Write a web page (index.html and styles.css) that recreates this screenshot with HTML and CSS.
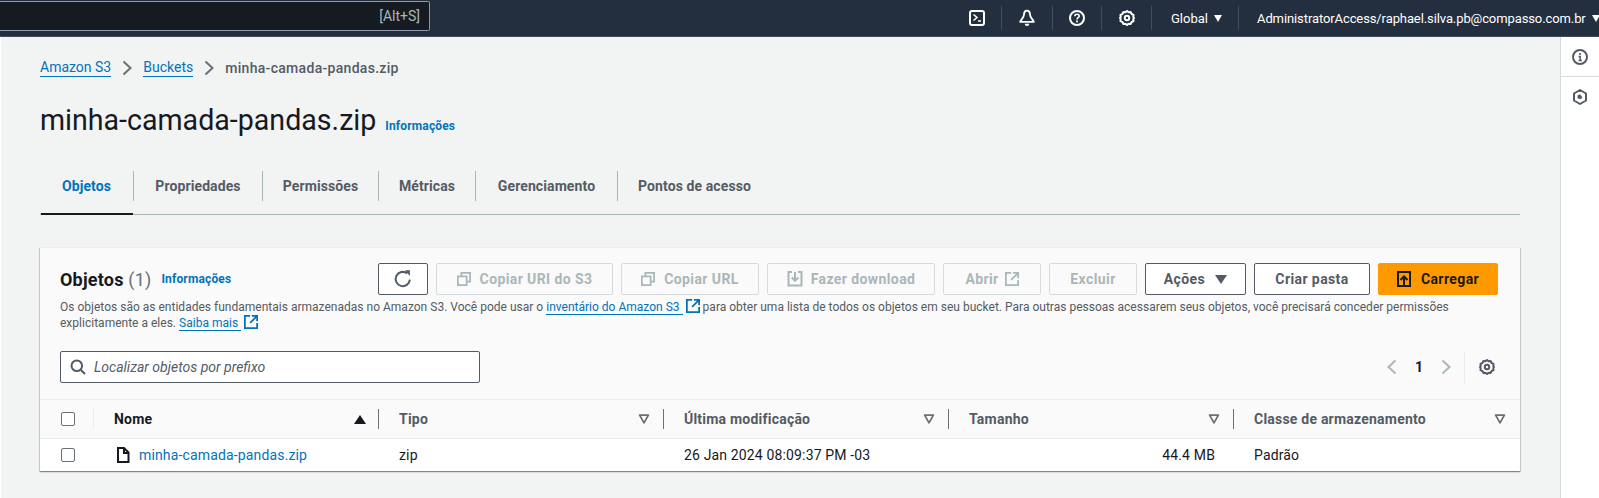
FILE: index.html
```html
<!DOCTYPE html>
<html lang="en">

<head>
    <meta charset="UTF-8" />
    <meta name="viewport" content="width=device-width, initial-scale=1.0" />
    <title>minha-camada-pandas.zip</title>
    <link rel="stylesheet" href="styles.css">
</head>

<body>
    <svg class="defs" width="0" height="0">
        <symbol id="i-gear" viewBox="0 0 16 16">
            <path d="M8 1l1.600 1.300 2.100-.2.900 1.900 1.900.9-.2 2.100L15 8l-.7 1 .2 2.100-1.900.9-.9 1.900-2.100-.2L8 15l-1.600-1.300-2.100.2-.9-1.900-1.900-.9.2-2.100L1 8l.7-1-.2-2.100 1.900-.9.9-1.900 2.100.2z" fill="none" stroke="currentColor" stroke-width="2" stroke-linejoin="round" />
            <circle cx="8" cy="8" r="2.200" fill="none" stroke="currentColor" stroke-width="2" />
        </symbol>
        <symbol id="i-copy" viewBox="0 0 16 16">
            <path d="M5 5V1h10v10h-4M1 5h10v10H1z" fill="none" stroke="currentColor" stroke-width="2" />
        </symbol>
        <symbol id="i-ext" viewBox="0 0 16 16">
            <path d="M7 1H1v14h14V9M9 1h6v6M15 1L7 9" fill="none" stroke="currentColor" stroke-width="2" />
        </symbol>
        <symbol id="i-filter" viewBox="0 0 16 16">
            <path d="M3 3.500h10L8 12.500z" fill="none" stroke="currentColor" stroke-width="2" stroke-linejoin="round" />
        </symbol>
    </svg>

    <header class="topbar">
        <div class="search-global"><span>[Alt+S]</span></div>
        <div class="top-actions">
            <div class="top-icon">
                <svg width="16" height="16" viewBox="0 0 16 16"><rect x="1" y="1" width="14" height="14" rx="2" fill="none" stroke="currentColor" stroke-width="2" /><path d="M4.500 4.500L8 7.500l-3.500 3M9 11h3" fill="none" stroke="currentColor" stroke-width="1.600" /></svg>
            </div>
            <div class="top-icon top-icon-wide">
                <svg width="18" height="18" viewBox="0 0 16 16"><path d="M8 1.500c1.700 0 2.600 1.300 2.600 3.200 0 3 3.400 5.300 3.400 6.800H2c0-1.500 3.400-3.800 3.400-6.800C5.400 2.800 6.300 1.500 8 1.500z" fill="none" stroke="currentColor" stroke-width="1.600" stroke-linejoin="round" /><path d="M6 13a2 2 0 004 0z" fill="currentColor" /></svg>
            </div>
            <div class="top-icon top-icon-thin">
                <svg width="16" height="16" viewBox="0 0 16 16"><circle cx="8" cy="8" r="7" fill="none" stroke="currentColor" stroke-width="2" /><path d="M5.800 6.200C5.800 4.900 6.800 4.200 8 4.200s2.200.8 2.200 1.900c0 1.600-2.200 1.700-2.200 3.400" fill="none" stroke="currentColor" stroke-width="1.600" /><rect x="7.100" y="10.500" width="1.800" height="1.800" fill="currentColor" /></svg>
            </div>
            <div class="top-icon">
                <svg width="16" height="16"><use href="#i-gear" /></svg>
            </div>
            <div class="top-menu top-region">Global <i class="caret"></i></div>
            <div class="top-menu top-user">AdministratorAccess/raphael.silva.pb@compasso.com.br <i class="caret"></i></div>
        </div>
    </header>

    <div class="layout">
        <main class="main">
            <nav class="crumbs">
                <a href="#">Amazon S3</a>
                <svg class="crumb-sep" width="10" height="16" viewBox="0 0 10 16"><path d="M1.500 1.500L8.500 8l-7 6.500" fill="none" stroke="currentColor" stroke-width="2" /></svg>
                <a href="#">Buckets</a>
                <svg class="crumb-sep" width="10" height="16" viewBox="0 0 10 16"><path d="M1.500 1.500L8.500 8l-7 6.500" fill="none" stroke="currentColor" stroke-width="2" /></svg>
                <span>minha-camada-pandas.zip</span>
            </nav>

            <div class="page-title">
                <h1>minha-camada-pandas.zip</h1>
                <a class="info" href="#">Informações</a>
            </div>

            <ul class="tabs">
                <li class="tab tab-active">Objetos</li>
                <li class="tab tab-2">Propriedades</li>
                <li class="tab tab-3">Permissões</li>
                <li class="tab tab-4">Métricas</li>
                <li class="tab tab-5">Gerenciamento</li>
                <li class="tab tab-6">Pontos de acesso</li>
            </ul>

            <section class="card">
                <div class="card-head">
                    <div class="card-top">
                        <h2>Objetos <span class="count">(1)</span></h2>
                        <a class="info" href="#">Informações</a>
                        <div class="toolbar">
                            <button class="btn btn-refresh">
                                <svg width="20" height="20" viewBox="0 0 16 16"><path d="M13.500 8.500a5.700 5.700 0 11-2.200-5" fill="none" stroke="currentColor" stroke-width="1.600" /><path d="M9.500 1h4v4.500z" fill="currentColor" /></svg>
                            </button>
                            <button class="btn btn-off btn-uri"><svg width="14" height="14"><use href="#i-copy" /></svg>Copiar URI do S3</button>
                            <button class="btn btn-off btn-url"><svg width="14" height="14"><use href="#i-copy" /></svg>Copiar URL</button>
                            <button class="btn btn-off btn-down">
                                <svg width="16" height="16" viewBox="0 0 16 16"><path d="M5 1H1.500v13.500h13V1H11M8 1v8M4.800 6.500L8 9.800l3.200-3.300" fill="none" stroke="currentColor" stroke-width="2" /></svg>
                                Fazer download
                            </button>
                            <button class="btn btn-off btn-open">Abrir <svg width="14" height="14"><use href="#i-ext" /></svg></button>
                            <button class="btn btn-off btn-del">Excluir</button>
                            <button class="btn btn-acts">Ações <i class="caret caret-big"></i></button>
                            <button class="btn btn-folder">Criar pasta</button>
                            <button class="btn btn-primary">
                                <svg width="14" height="16" viewBox="0 0 14 16"><path d="M1 1h12v14H1zM7 15V6M3.500 9L7 5.500 10.500 9" fill="none" stroke="currentColor" stroke-width="2" /></svg>
                                Carregar
                            </button>
                        </div>
                    </div>
                    <div class="desc">
                        <p>Os objetos são as entidades fundamentais armazenadas no Amazon S3. Você pode usar o <a href="#">inventário do Amazon S3</a> <svg width="14" height="14"><use href="#i-ext" /></svg> para obter uma lista de todos os objetos em seu bucket. Para outras pessoas acessarem seus objetos, você precisará conceder permissões</p>
                        <p>explicitamente a eles. <a href="#">Saiba mais</a> <svg width="14" height="14"><use href="#i-ext" /></svg></p>
                    </div>
                    <div class="filter-row">
                        <div class="filter-box">
                            <svg width="16" height="16" viewBox="0 0 16 16"><circle cx="6.800" cy="6.800" r="5.300" fill="none" stroke="currentColor" stroke-width="2" /><path d="M10.700 10.700L15 15" stroke="currentColor" stroke-width="2" /></svg>
                            <span>Localizar objetos por prefixo</span>
                        </div>
                        <div class="pager">
                            <svg class="pager-arrow" width="10" height="16" viewBox="0 0 10 16"><path d="M8.500 1.500L1.500 8l7 6.500" fill="none" stroke="currentColor" stroke-width="2" /></svg>
                            <span class="page-num">1</span>
                            <svg class="pager-arrow" width="10" height="16" viewBox="0 0 10 16"><path d="M1.500 1.500L8.500 8l-7 6.500" fill="none" stroke="currentColor" stroke-width="2" /></svg>
                            <div class="pager-gear"><svg width="16" height="16"><use href="#i-gear" /></svg></div>
                        </div>
                    </div>
                </div>

                <div class="table">
                    <div class="th th-check"><i class="check"></i></div>
                    <div class="th th-name">Nome <i class="sort-up"></i></div>
                    <div class="th">Tipo <svg class="flt" width="14" height="14"><use href="#i-filter" /></svg></div>
                    <div class="th">Última modificação <svg class="flt" width="14" height="14"><use href="#i-filter" /></svg></div>
                    <div class="th">Tamanho <svg class="flt" width="14" height="14"><use href="#i-filter" /></svg></div>
                    <div class="th th-last">Classe de armazenamento <svg class="flt" width="14" height="14"><use href="#i-filter" /></svg></div>

                    <div class="td td-check"><i class="check"></i></div>
                    <div class="td td-name">
                        <svg width="14" height="16" viewBox="0 0 14 16"><path d="M2 1h6l4.500 4.500V15H2zM8 1v5h4.500" fill="none" stroke="currentColor" stroke-width="2" /></svg>
                        <a href="#">minha-camada-pandas.zip</a>
                    </div>
                    <div class="td">zip</div>
                    <div class="td">26 Jan 2024 08:09:37 PM -03</div>
                    <div class="td td-size">44.4 MB</div>
                    <div class="td">Padrão</div>
                </div>
            </section>
        </main>

        <aside class="side">
            <div class="side-item">
                <svg width="16" height="16" viewBox="0 0 16 16"><circle cx="8" cy="8" r="7" fill="none" stroke="currentColor" stroke-width="2" /><path d="M6.500 7.500H8.200V11.500M6.500 11.500h3.400" fill="none" stroke="currentColor" stroke-width="1.500" /><rect x="7.200" y="4" width="1.800" height="1.800" fill="currentColor" /></svg>
            </div>
            <div class="side-item side-item-2">
                <svg width="16" height="16" viewBox="0 0 16 16"><path d="M8 1l6 3.500v7L8 15l-6-3.500v-7z" fill="none" stroke="currentColor" stroke-width="2" stroke-linejoin="round" /><path d="M5.500 6.500L8 5.200l2.500 3.300-2 1.800-3-1z" fill="currentColor" /></svg>
            </div>
        </aside>
    </div>
</body>

</html>
```

FILE: styles.css
```css
* {
    box-sizing: border-box;
}

html,
body {
    margin: 0;
    height: 498px;
    overflow: hidden;
}

body {
    background-color: #f2f3f3;
    color: #16191f;
    font-family: Roboto, "Liberation Sans", sans-serif;
    font-size: 14px;
}

a {
    color: #0073bb;
    text-decoration: none;
}

.defs {
    position: absolute;
}

/* top nav */
.topbar {
    display: flex;
    justify-content: space-between;
    height: 37px;
    background-color: #232f3e;
    border-bottom: 1px solid #3f4b5b;
    color: #fff;
}

.search-global {
    display: flex;
    align-items: center;
    justify-content: flex-end;
    width: 430px;
    height: 30px;
    margin-top: 1px;
    padding-right: 9px;
    background-color: #161b22;
    border: 1px solid #8d99a8;
    border-left: 0;
    border-radius: 0 2px 2px 0;
    color: #aab7b8;
    font-size: 14px;
}

.top-actions {
    display: flex;
    align-items: center;
    height: 36px;
}

.top-icon {
    display: flex;
    align-items: center;
    justify-content: center;
    width: 50px;
    height: 24px;
    border-right: 1px solid #414d5c;
}

.top-icon-wide {
    width: 51px;
}

.top-icon-thin {
    width: 49px;
}

.top-menu {
    display: flex;
    align-items: center;
    height: 24px;
    font-size: 13px;
}

.top-region {
    width: 87px;
    padding-left: 19px;
    border-right: 1px solid #414d5c;
}

.top-user {
    width: 360px;
    padding-left: 18px;
    letter-spacing: -0.1px;
}

.caret {
    width: 0;
    height: 0;
    margin-left: 6px;
    border-left: 4.5px solid transparent;
    border-right: 4.5px solid transparent;
    border-top: 7px solid currentColor;
}

/* page */
.layout {
    display: flex;
    height: 461px;
}

.main {
    flex: 1;
    padding: 0 40px 0 39px;
    border-left: 1px solid #fff;
}

.crumbs {
    display: flex;
    align-items: center;
    gap: 11px;
    height: 20px;
    margin-top: 21px;
    color: #545b64;
}

.crumbs a {
    border-bottom: 1px solid #0073bb;
    line-height: 17px;
}

.crumbs span {
    font-weight: 500;
    letter-spacing: 0.3px;
}

.crumb-sep {
    color: #687078;
}

.page-title {
    display: flex;
    align-items: baseline;
    gap: 9px;
    margin-top: 20px;
}

h1 {
    margin: 0;
    font-size: 28.6px;
    font-weight: 400;
    line-height: 45px;
}

.info {
    font-size: 12px;
    font-weight: 700;
    letter-spacing: 0.15px;
}

/* tabs */
.tabs {
    display: flex;
    height: 45px;
    margin: 27px 0 0 0;
    padding: 0 0 3px 0;
    list-style: none;
    border-bottom: 1px solid #aab7b8;
    font-weight: 700;
    font-size: 14px;
    letter-spacing: 0.1px;
    color: #545b64;
    position: relative;
}

.tab {
    display: flex;
    align-items: center;
    justify-content: center;
    height: 30px;
    margin-top: 1px;
    border-right: 1px solid #aab7b8;
}

.tab-active {
    width: 94px;
    color: #0073bb;
}

/* underline sits over the tab border */
.tab-active::after {
    content: "";
    position: absolute;
    left: 1px;
    bottom: -1px;
    width: 92px;
    height: 2px;
    background-color: #16191f;
}

.tab-2 {
    width: 129px;
}

.tab-3 {
    width: 116px;
}

.tab-4 {
    width: 97px;
}

.tab-5 {
    width: 142px;
}

.tab-6 {
    width: 153px;
    border-right: 0;
}

/* card */
.card {
    width: 1480px;
    margin-top: 32px;
    background-color: #fff;
    box-shadow: 0 1px 1px 0 rgba(0, 28, 36, 0.3), 1px 1px 1px 0 rgba(0, 28, 36, 0.15), -1px 1px 1px 0 rgba(0, 28, 36, 0.15);
    border-top: 1px solid #eaeded;
}

.card-head {
    height: 152px;
    padding: 15px 22px 0 20px;
    background-color: #fafafa;
    border-bottom: 1px solid #eaeded;
}

.card-top {
    display: flex;
    align-items: center;
    height: 32px;
}

h2 {
    margin: 0 10px 0 0;
    font-size: 18px;
    font-weight: 700;
    letter-spacing: 0.2px;
}

.count {
    color: #687078;
    font-weight: 400;
}

.toolbar {
    display: flex;
    gap: 8px;
    margin-left: auto;
}

.btn {
    display: flex;
    align-items: center;
    justify-content: center;
    gap: 9px;
    height: 32px;
    padding: 0;
    background-color: #fff;
    border: 1px solid #545b64;
    border-radius: 2px;
    color: #545b64;
    font-family: inherit;
    font-size: 14px;
    font-weight: 700;
    letter-spacing: 0.4px;
}

.btn-off {
    background-color: #fafafa;
    border-color: #d5dbdb;
    color: #aab7b8;
}

.btn-refresh {
    width: 50px;
    color: #545b64;
}

.btn-uri {
    width: 177px;
}

.btn-url {
    width: 138px;
}

.btn-down {
    width: 168px;
    gap: 8px;
}

.btn-open {
    width: 98px;
    gap: 6px;
}

.btn-del {
    width: 88px;
}

.btn-acts {
    width: 101px;
    gap: 5px;
}

.btn-folder {
    width: 116px;
}

.btn-primary {
    width: 120px;
    background-color: #ff9900;
    border-color: #ff9900;
    color: #16191f;
    gap: 10px;
}

.caret-big {
    margin-left: 5px;
    border-left-width: 6px;
    border-right-width: 6px;
    border-top-width: 9px;
}

.desc {
    margin-top: 4px;
    color: #545b64;
    font-size: 12px;
    line-height: 16px;
    letter-spacing: 0.01px;
    white-space: nowrap;
}

.desc p {
    margin: 0;
}

.desc a {
    padding-right: 3px;
    border-bottom: 1px solid #0073bb;
}

.desc svg {
    vertical-align: -2px;
    color: #0073bb;
}

.filter-row {
    display: flex;
    justify-content: space-between;
    align-items: center;
    margin-top: 20px;
    height: 32px;
}

.filter-box {
    display: flex;
    align-items: center;
    gap: 8px;
    width: 420px;
    height: 32px;
    padding-left: 9px;
    background-color: #fff;
    border: 1px solid #545b64;
    border-radius: 2px;
    color: #545b64;
    font-size: 14px;
    font-style: italic;
}

.pager {
    display: flex;
    align-items: center;
    height: 32px;
}

.pager-arrow {
    color: #aab7b8;
}

.page-num {
    margin: 0 18px;
    font-weight: 700;
    font-size: 14px;
}

.pager-gear {
    display: flex;
    align-items: center;
    justify-content: flex-end;
    width: 34px;
    height: 32px;
    margin-left: 13px;
    padding-right: 3px;
    border-left: 1px solid #eaeded;
    color: #545b64;
}

/* table */
.table {
    display: grid;
    grid-template-columns: 54px repeat(4, 285px) 286px;
    grid-template-rows: 39px 32px;
}

.th {
    display: flex;
    align-items: center;
    justify-content: space-between;
    height: 39px;
    padding: 0 13px 0 20px;
    background-color: #fafafa;
    border-bottom: 1px solid #eaeded;
    color: #545b64;
    font-weight: 700;
    letter-spacing: 0.22px;
    position: relative;
}

/* small column rule at the right of a header cell */
.th::after {
    content: "";
    position: absolute;
    right: 0;
    top: 9px;
    height: 20px;
    width: 1px;
    background-color: #687078;
}

.th-check {
    padding: 0 0 0 21px;
}

.th-check::after {
    background-color: #eaeded;
}

.th-name {
    color: #16191f;
}

.th-last::after {
    display: none;
}

.flt {
    color: #687078;
}

.sort-up {
    width: 0;
    height: 0;
    border-left: 6px solid transparent;
    border-right: 6px solid transparent;
    border-bottom: 9px solid #16191f;
}

.check {
    display: block;
    width: 14px;
    height: 14px;
    background-color: #fff;
    border: 1px solid #687078;
    border-radius: 2px;
}

.td {
    display: flex;
    align-items: center;
    height: 32px;
    padding-left: 20px;
    letter-spacing: 0.15px;
}

.td-check {
    padding-left: 21px;
}

.td-name {
    gap: 9px;
    padding-left: 22px;
}

.td-size {
    justify-content: flex-end;
    padding-right: 19px;
}

/* right rail */
.side {
    width: 39px;
    background-color: #fff;
    border-left: 1px solid #d5dbdb;
    color: #545b64;
}

.side-item {
    display: flex;
    align-items: center;
    justify-content: center;
    height: 40px;
    border-bottom: 1px solid #d5dbdb;
}

.side-item-2 {
    border-bottom: 0;
}
```
